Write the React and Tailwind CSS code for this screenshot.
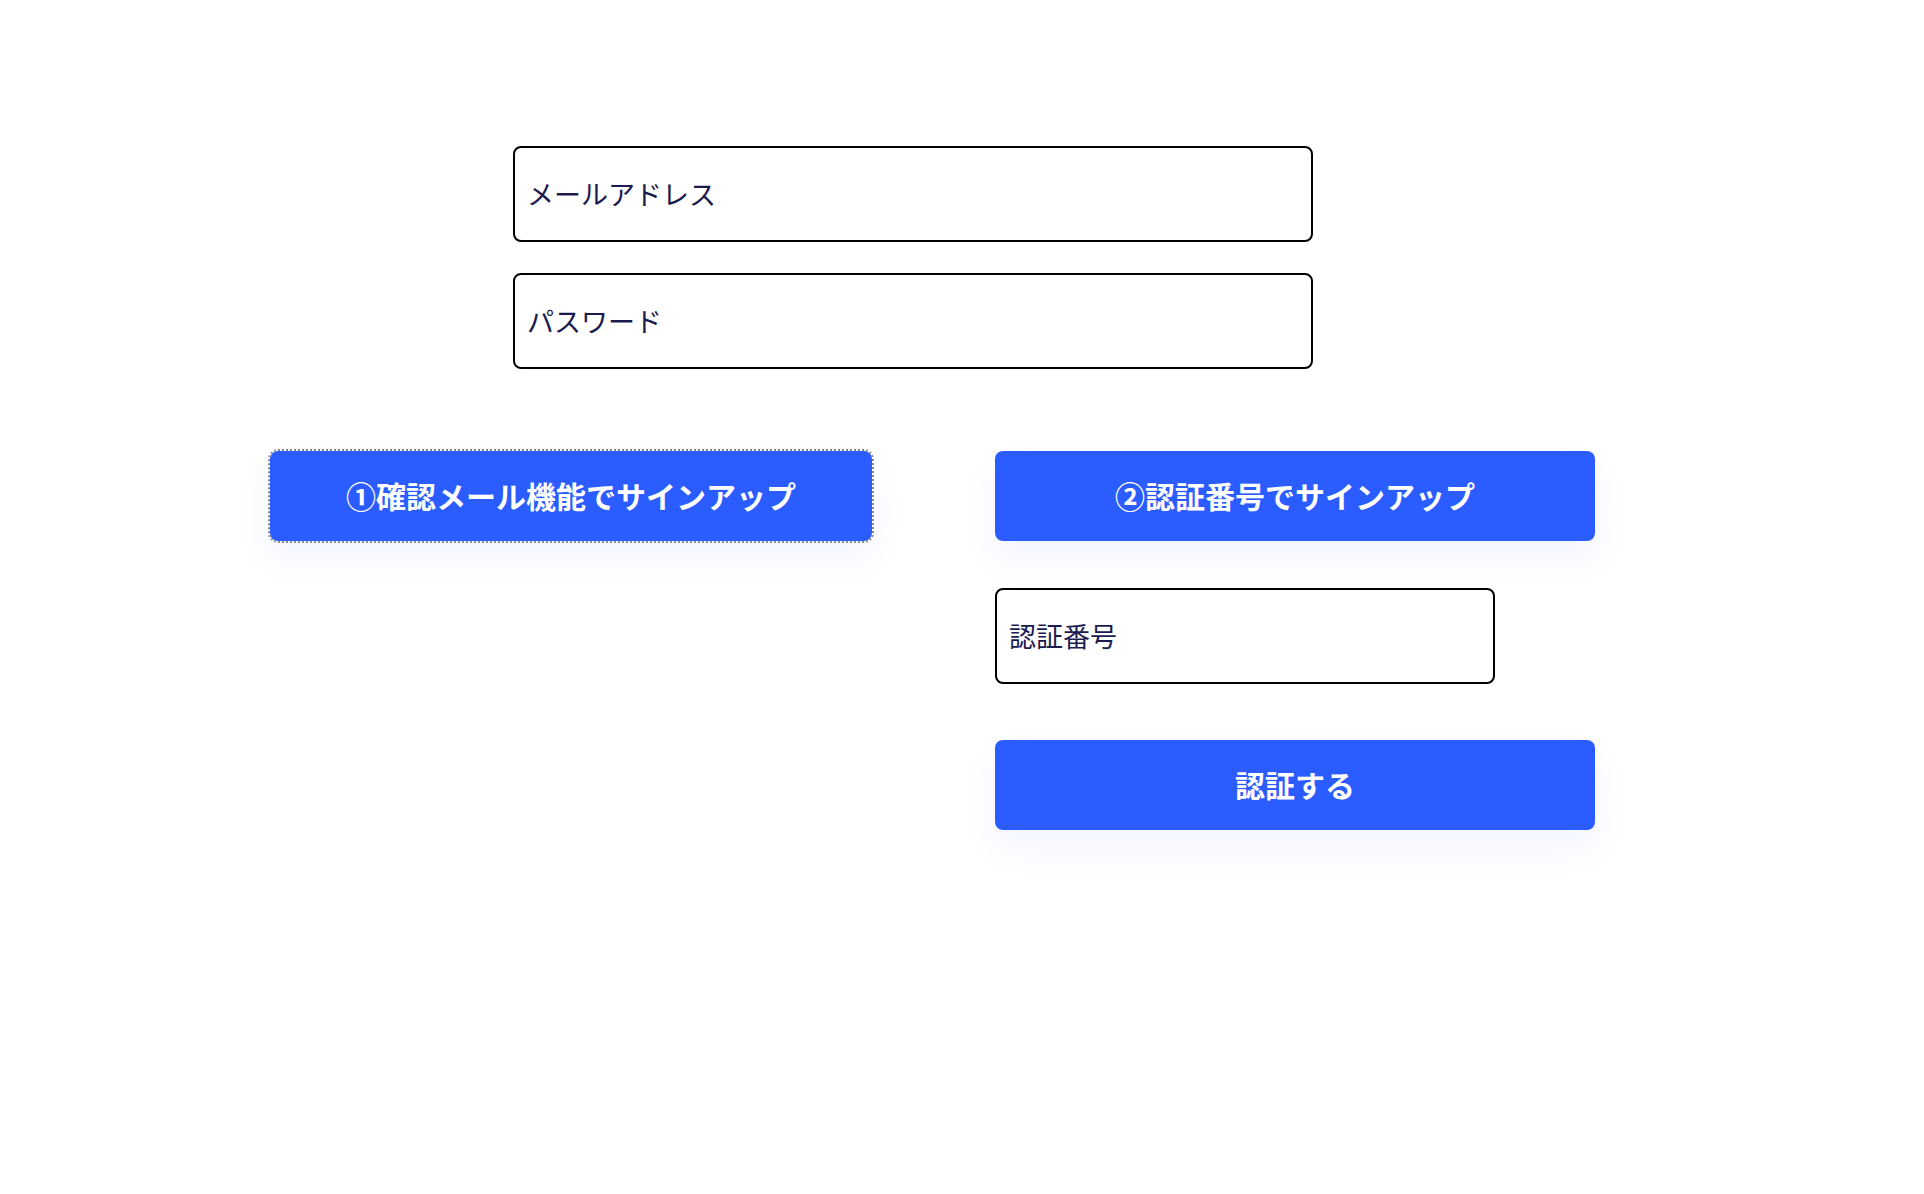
export default function App() {
    const inputCls =
        'block h-[96px] w-full rounded-lg border-2 border-black bg-white pl-[12px] pb-[2px] text-[27px] text-[#1b1b4f] outline-none placeholder:text-[#1b1b4f]';
    const btnCls =
        'flex h-[90px] w-[600px] items-center justify-center rounded-lg bg-[#2a5cff] pb-[2px] text-[30px] font-bold text-white shadow-[0_18px_36px_rgba(42,92,255,0.06)]';

    return (
        <div
            className="min-h-screen bg-white pt-[146px]"
            style={{ fontFamily: '"Noto Sans CJK JP", "Noto Sans", sans-serif' }}
        >
            <div className="ml-[513px] flex w-[800px] flex-col gap-[31px]">
                <input type="email" placeholder="メールアドレス" className={inputCls} />
                <input type="password" placeholder="パスワード" className={inputCls} />
            </div>

            <div className="mt-[82px] flex items-start gap-[123px] pl-[270px]">
                <button className={`${btnCls} w-[602px] outline-2 outline-dotted outline-[#8a8a8a]`}>
                    ①確認メール機能でサインアップ
                </button>

                <div className="flex flex-col">
                    <button className={btnCls}>②認証番号でサインアップ</button>
                    <div className="mt-[47px] w-[500px]">
                        <input type="text" placeholder="認証番号" className={inputCls} />
                    </div>
                    <button className={`${btnCls} mt-[56px]`}>認証する</button>
                </div>
            </div>
        </div>
    );
}
